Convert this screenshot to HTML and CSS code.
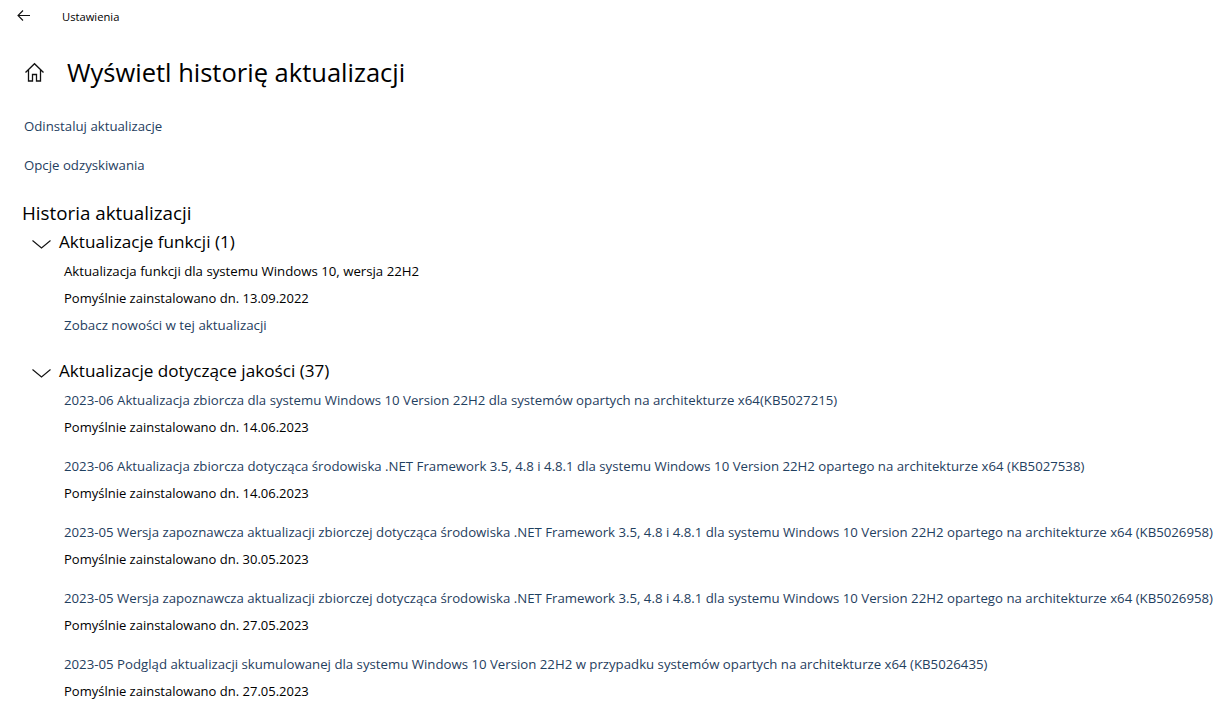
FILE: index.html
```html
<!DOCTYPE html>
<html lang="pl">
<head>
  <meta charset="utf-8">
  <title>Ustawienia</title>
  <link rel="stylesheet" href="styles.css">
</head>
<body>
  <div class="topbar">
    <svg class="back-icon" width="16" height="16" viewBox="0 0 16 16"><path d="M14 7.5H2.2M7 2.5 2 7.5l5 5" fill="none" stroke="#111" stroke-width="1.1"/></svg>
    <span class="app-name">Ustawienia</span>
  </div>

  <div class="page-head">
    <svg class="home-icon" width="21" height="21" viewBox="0 0 21 21"><path d="M1.5 10.5 10.5 1.7l9 8.8M4.5 7.8V19h4v-6.5h4V19h4V7.8" fill="none" stroke="#111" stroke-width="1.3"/></svg>
    <h1>Wyświetl historię aktualizacji</h1>
  </div>

  <div class="top-links">
    <a class="link">Odinstaluj aktualizacje</a>
    <a class="link">Opcje odzyskiwania</a>
  </div>

  <h2>Historia aktualizacji</h2>

  <div class="group">
    <h3 class="group-head">
      <svg class="chevron" width="20" height="10" viewBox="0 0 20 10"><path d="M.5 1.5 9.5 9l9-7.5" fill="none" stroke="#111" stroke-width="1.1"/></svg>
      Aktualizacje funkcji (1)
    </h3>
    <div class="update">
      <div class="row">Aktualizacja funkcji dla systemu Windows 10, wersja 22H2</div>
      <div class="row date">Pomyślnie zainstalowano dn. 13.09.2022</div>
      <div class="row link news">Zobacz nowości w tej aktualizacji</div>
    </div>
  </div>

  <div class="group">
    <h3 class="group-head">
      <svg class="chevron" width="20" height="10" viewBox="0 0 20 10"><path d="M.5 1.5 9.5 9l9-7.5" fill="none" stroke="#111" stroke-width="1.1"/></svg>
      Aktualizacje dotyczące jakości (37)
    </h3>
    <div class="update">
      <div class="row link">2023-06 Aktualizacja zbiorcza dla systemu Windows 10 Version 22H2 dla systemów opartych na architekturze x64(KB5027215)</div>
      <div class="row date">Pomyślnie zainstalowano dn. 14.06.2023</div>
    </div>
    <div class="update">
      <div class="row link">2023-06 Aktualizacja zbiorcza dotycząca środowiska .NET Framework 3.5, 4.8 i 4.8.1 dla systemu Windows 10 Version 22H2 opartego na architekturze x64 (KB5027538)</div>
      <div class="row date">Pomyślnie zainstalowano dn. 14.06.2023</div>
    </div>
    <div class="update">
      <div class="row link">2023-05 Wersja zapoznawcza aktualizacji zbiorczej dotycząca środowiska .NET Framework 3.5, 4.8 i 4.8.1 dla systemu Windows 10 Version 22H2 opartego na architekturze x64 (KB5026958)</div>
      <div class="row date">Pomyślnie zainstalowano dn. 30.05.2023</div>
    </div>
    <div class="update">
      <div class="row link">2023-05 Wersja zapoznawcza aktualizacji zbiorczej dotycząca środowiska .NET Framework 3.5, 4.8 i 4.8.1 dla systemu Windows 10 Version 22H2 opartego na architekturze x64 (KB5026958)</div>
      <div class="row date">Pomyślnie zainstalowano dn. 27.05.2023</div>
    </div>
    <div class="update">
      <div class="row link">2023-05 Podgląd aktualizacji skumulowanej dla systemu Windows 10 Version 22H2 w przypadku systemów opartych na architekturze x64 (KB5026435)</div>
      <div class="row date">Pomyślnie zainstalowano dn. 27.05.2023</div>
    </div>
  </div>
</body>
</html>
```

FILE: styles.css
```css
* { margin: 0; padding: 0; box-sizing: border-box; }
html, body { height: 100%; overflow: hidden; }
body {
  font-family: "Open Sans", "Noto Sans", sans-serif;
  font-size: 13.22px;
  background: #fff;
  color: #000;
  white-space: nowrap;
}
.topbar {
  display: flex;
  align-items: center;
  height: 32px;
  padding-left: 16px;
}
.back-icon { margin-right: 30px; }
.app-name { font-size: 11.2px; }
.page-head {
  display: flex;
  align-items: center;
  height: 40px;
  margin-top: 20px;
  padding-left: 24px;
}
.home-icon { margin-right: 22px; }
h1 { font-size: 25.5px; font-weight: 400; }
.top-links { padding: 24px 0 0 24px; }
.top-links .link { display: block; height: 39px; line-height: 20px; }
.link { color: #1f4060; }
h2 {
  font-size: 18.8px;
  font-weight: 400;
  line-height: 26px;
  padding-left: 22px;
  margin-top: 6px;
}
.group { padding-left: 32px; }
.group + .group { margin-top: 4px; }
.group-head {
  display: flex;
  align-items: center;
  font-size: 17.15px;
  font-weight: 400;
  line-height: 24px;
  padding: 4px 0;
}
.chevron { margin: 4px 7px 0 0; }
.update { padding: 0 0 12px 32px; }
.row { height: 27px; line-height: 27px; }
.date { font-size: 13px; }
.news { font-size: 13.35px; }
```
